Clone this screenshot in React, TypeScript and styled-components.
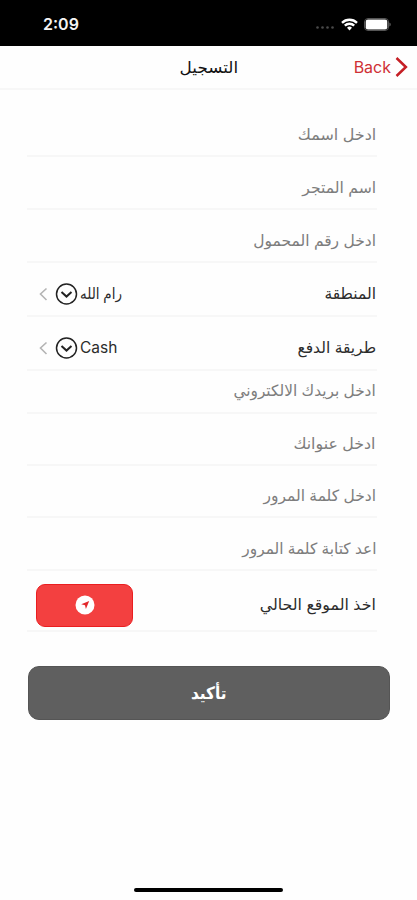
import React from "react";
import styled, { createGlobalStyle } from "styled-components";

const GlobalStyle = createGlobalStyle`
  * { box-sizing: border-box; }
  body { margin: 0; background: #fff; }
`;

const Screen = styled.div`
  width: 417px;
  height: 900px;
  background: #fefefe;
  display: flex;
  flex-direction: column;
  overflow: hidden;
  font-family: "Inter", "DejaVu Sans", sans-serif;
`;

const StatusBar = styled.header`
  height: 46px;
  flex: none;
  background: #000;
  display: flex;
  justify-content: space-between;
  align-items: center;
  padding: 2px 26px 0 43px;
`;

const Clock = styled.span`
  color: #f4f4f4;
  font-family: "Inter", sans-serif;
  font-size: 16px;
  font-weight: 600;
`;

const StatusIcons = styled.div`
  display: flex;
  align-items: center;
  gap: 6px;
`;

const NavBar = styled.nav`
  height: 44px;
  flex: none;
  display: grid;
  grid-template-columns: 1fr auto 1fr;
  align-items: center;
  padding: 0 9px;
  border-bottom: 2px solid #f7f7f7;
`;

const Text = styled.span<{ $size?: number; $color?: string; $weight?: number; $stretch?: number; $origin?: string }>`
  display: block;
  white-space: nowrap;
  line-height: 20px;
  font-size: ${(p) => p.$size ?? 15.5}px;
  color: ${(p) => p.$color ?? "#2c2c2c"};
  font-weight: ${(p) => p.$weight ?? 400};
  transform: scaleX(${(p) => p.$stretch ?? 1});
  transform-origin: ${(p) => p.$origin ?? "right"};
`;

const BackButton = styled.div`
  grid-column: 3;
  justify-self: end;
  display: flex;
  align-items: center;
  gap: 4px;
`;

const Title = styled.div`
  grid-column: 2;
`;

const Form = styled.main`
  margin: 14px 40px 0 27px;
  display: flex;
  flex-direction: column;
`;

const Row = styled.div<{ $height: number; $top?: number; $bottom?: number }>`
  height: ${(p) => p.$height}px;
  padding: ${(p) => p.$top ?? 10}px 1px ${(p) => p.$bottom ?? 0}px 9px;
  border-bottom: 2px solid #f7f7f7;
  display: flex;
  justify-content: space-between;
  align-items: center;
  direction: rtl;
`;

const Picker = styled.div`
  display: flex;
  align-items: center;
  direction: ltr;
  width: 85px;

  svg { flex: none; }
`;

const LocateButton = styled.button`
  width: 97px;
  height: 43px;
  padding: 0;
  border: 1.5px solid #ea1e20;
  border-radius: 9px;
  background: #f34040;
  display: flex;
  align-items: center;
  justify-content: center;
`;

const Submit = styled.button`
  width: 362px;
  height: 54px;
  flex: none;
  margin: 34px 0 0 28px;
  padding: 0;
  border: 1px solid #555;
  border-radius: 11px;
  background: #5f5f5f;
  font-family: inherit;
  display: flex;
  align-items: center;
  justify-content: center;
`;

const HomeIndicator = styled.div`
  width: 149px;
  height: 4px;
  margin: auto auto 8px;
  border-radius: 2px;
  background: #000;
`;

const ChevronAndCircle = () => (
  <svg width="44" height="24" viewBox="0 0 44 24" fill="none">
    <path d="M10.5 6.5 4.5 12l6 6" stroke="#b4b4b4" strokeWidth="1.6" />
    <circle cx="30.5" cy="12" r="10" stroke="#222" strokeWidth="1.5" />
    <path d="m25.5 10 5 4.6 5-4.6" stroke="#222" strokeWidth="2" />
  </svg>
);

type Field = {
  label: string;
  height: number;
  top?: number;
  bottom?: number;
  stretch?: number;
  value?: string;
  valueStretch?: number;
  locate?: boolean;
};

const fields: Field[] = [
  { label: "ادخل اسمك", height: 53, stretch: 1.03 },
  { label: "اسم المتجر", height: 53, stretch: 1.01 },
  { label: "ادخل رقم المحمول", height: 53 },
  { label: "المنطقة", height: 54, value: "رام الله", valueStretch: 0.87 },
  { label: "طريقة الدفع", height: 54, value: "Cash" },
  { label: "ادخل بريدك الالكتروني", height: 43, top: 0, bottom: 2, stretch: 0.99 },
  { label: "ادخل عنوانك", height: 52, stretch: 1.02 },
  { label: "ادخل كلمة المرور", height: 52 },
  { label: "اعد كتابة كلمة المرور", height: 53, stretch: 0.99 },
  { label: "اخذ الموقع الحالي", height: 61, top: 9, locate: true, stretch: 1.02 },
];

export default function App() {
  return (
    <>
      <GlobalStyle />
      <Screen>
        <StatusBar>
          <Clock>2:09</Clock>
          <StatusIcons>
            <svg width="20" height="14" viewBox="0 0 20 14" fill="#4a4a4a">
              <circle cx="2.5" cy="10.5" r="1.3" />
              <circle cx="7.5" cy="10.5" r="1.3" />
              <circle cx="12.5" cy="10.5" r="1.3" />
              <circle cx="17.5" cy="10.5" r="1.3" />
            </svg>
            <svg width="17" height="13" viewBox="0 0 17 13" fill="none" stroke="#fff" strokeWidth="2.4">
              <path d="M1 4.8a10.8 10.8 0 0 1 15 0" />
              <path d="M3.8 7.7a6.8 6.8 0 0 1 9.4 0" />
              <path d="M8.5 12.5 6 9.8a3.6 3.6 0 0 1 5 0Z" fill="#fff" stroke="none" />
            </svg>
            <svg width="27" height="13" viewBox="0 0 27 13">
              <rect x=".5" y=".5" width="24" height="12" rx="3.5" fill="none" stroke="#555" />
              <rect x="1.7" y="1.5" width="21.6" height="10" rx="2.3" fill="#fff" />
              <path d="M25.5 4.5v4c1.5-.8 1.5-3.2 0-4Z" fill="#777" />
            </svg>
          </StatusIcons>
        </StatusBar>
        <NavBar>
          <Title>
            <Text $size={16} $weight={500} $color="#111" $stretch={1.05} $origin="center" dir="rtl">التسجيل</Text>
          </Title>
          <BackButton>
            <Text $size={16} $color="#cf3035">Back</Text>
            <svg width="13" height="20" viewBox="0 0 13 20" fill="none" stroke="#c51f25" strokeWidth="2.5">
              <path d="m1.5 1 9.4 9-9.4 9" />
            </svg>
          </BackButton>
        </NavBar>
        <Form>
          {fields.map((f) => (
            <Row key={f.label} $height={f.height} $top={f.top} $bottom={f.bottom}>
              <Text $color={f.value || f.locate ? "#2c2c2c" : "#7d7d7d"} $stretch={f.stretch}>
                {f.label}
              </Text>
              {f.value && (
                <Picker>
                  <ChevronAndCircle />
                  <Text $stretch={f.valueStretch} $origin="left">{f.value}</Text>
                </Picker>
              )}
              {f.locate && (
                <LocateButton>
                  <svg width="20" height="20" viewBox="0 0 20 20">
                    <circle cx="10" cy="10" r="9.5" fill="#fff" />
                    <path d="m14.2 6-8 3.3 3.8.9.9 3.8Z" fill="#e3282b" />
                  </svg>
                </LocateButton>
              )}
            </Row>
          ))}
        </Form>
        <Submit>
          <Text $size={17} $weight={600} $color="#fff" $stretch={0.9} $origin="center">تأكيد</Text>
        </Submit>
        <HomeIndicator />
      </Screen>
    </>
  );
}
